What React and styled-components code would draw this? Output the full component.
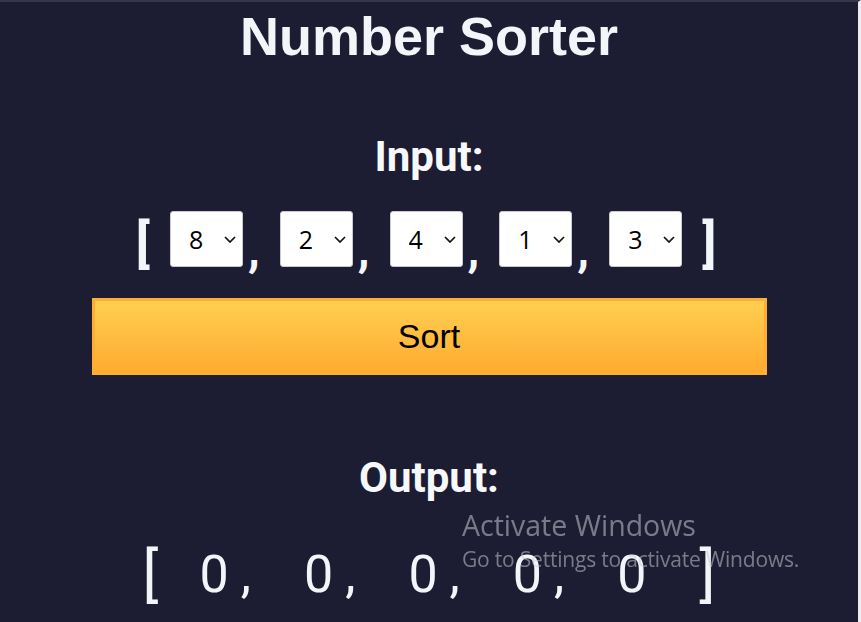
import React, { useState } from 'react';
import styled, { createGlobalStyle } from 'styled-components';

const GlobalStyle = createGlobalStyle`
    html, body {
        margin: 0;
        padding: 0;
        background: #1c1c32;
    }
    body {
        font-family: Roboto, 'Noto Sans', sans-serif;
    }
`;

function NumberSelect({ value, onChange }) {
    return (
        <SelectBox>
            <Select value={value} onChange={e => onChange(Number(e.target.value))}>
                {[0, 1, 2, 3, 4, 5, 6, 7, 8, 9].map(n => (
                    <option key={n} value={n}>{n}</option>
                ))}
            </Select>
            <Chevron width="12" height="7" viewBox="0 0 12 7">
                <path d="M1 1l5 5 5-5" fill="none" stroke="#111" strokeWidth="1.7" />
            </Chevron>
        </SelectBox>
    );
}

function App() {
    const [input, setInput] = useState([8, 2, 4, 1, 3]);
    const [output, setOutput] = useState([0, 0, 0, 0, 0]);

    const setAt = (i, v) => {
        const next = [...input];
        next[i] = v;
        setInput(next);
    };

    return (
        <Page>
            <GlobalStyle />
            <Title>Number Sorter</Title>
            <Heading>Input:</Heading>
            <InputRow>
                <Bracket>[</Bracket>
                {input.map((v, i) => (
                    <Item key={i}>
                        <NumberSelect value={v} onChange={nv => setAt(i, nv)} />
                        {i < input.length - 1 && <Comma>,</Comma>}
                    </Item>
                ))}
                <Bracket>]</Bracket>
            </InputRow>
            <SortButton onClick={() => setOutput([...input].sort((a, b) => a - b))}>
                Sort
            </SortButton>
            <Heading $output>Output:</Heading>
            <OutputRow>
                <OutBracket>[</OutBracket>
                {output.map((v, i) => (
                    <OutValue key={i}>{v}{i < output.length - 1 ? ',' : ''}</OutValue>
                ))}
                <OutBracket>]</OutBracket>
            </OutputRow>
            <Watermark>
                <WatermarkTitle>Activate Windows</WatermarkTitle>
                <WatermarkText>Go to Settings to activate Windows.</WatermarkText>
            </Watermark>
        </Page>
    );
}

export default App;

const Page = styled.div`
    box-sizing: border-box;
    min-height: 622px;
    border-top: 2px solid #35354d;
    border-right: 3px solid #ececec;
    display: flex;
    flex-direction: column;
    align-items: center;
    color: #f5f6fa;
`;

const Title = styled.h1`
    margin: 3px 0 0;
    font-family: 'Liberation Sans', Arial, sans-serif;
    font-size: 54px;
    font-weight: 700;
    line-height: 62px;
    color: #f4f5f9;
`;

const Heading = styled.h2`
    margin: ${props => props.$output ? '79px 0 0' : '66px 0 0'};
    font-family: Roboto, sans-serif;
    font-size: 42px;
    font-weight: 700;
    line-height: 48px;
    color: #f7f8fb;
`;

const InputRow = styled.div`
    display: flex;
    align-items: center;
    gap: 20px;
    margin: 30px 0 0 -6px;
    height: 56px;
`;

const Bracket = styled.span`
    font-family: Roboto, sans-serif;
    font-size: 51px;
    font-weight: 700;
    line-height: 1;
    margin-top: 8px;
    color: #f4f5f9;
`;

const Item = styled.div`
    display: flex;
    align-items: flex-end;
    gap: 5px;
`;

const Comma = styled.span`
    font-family: Roboto, sans-serif;
    font-size: 48px;
    font-weight: 700;
    line-height: 1;
    margin-bottom: -7px;
    color: #f4f5f9;
`;

const SelectBox = styled.div`
    position: relative;
    width: 73px;
    height: 56px;
`;

const Select = styled.select`
    appearance: none;
    box-sizing: border-box;
    width: 100%;
    height: 100%;
    padding: 0 0 0 18px;
    border: 1px solid #c9c9cf;
    border-radius: 3px;
    background: #ffffff;
    font-family: 'Open Sans', Roboto, sans-serif;
    font-size: 25px;
    color: #000;
    outline: none;
`;

const Chevron = styled.svg`
    position: absolute;
    right: 7px;
    top: 25px;
    pointer-events: none;
`;

const SortButton = styled.button`
    box-sizing: border-box;
    width: 675px;
    height: 77px;
    margin-top: 31px;
    border: 3px solid #ffad33;
    background: linear-gradient(to bottom, #ffcf52, #ffab2f);
    font-family: 'Liberation Sans', Arial, sans-serif;
    font-size: 34px;
    color: #000;
    cursor: pointer;
`;

const OutputRow = styled.div`
    display: flex;
    align-items: center;
    gap: 41px;
    margin-top: 43px;
    font-family: Roboto, sans-serif;
    font-size: 52px;
    color: #f4f5f9;
`;

const OutBracket = styled.span`
    font-size: 60px;
    line-height: 1;
`;

const OutValue = styled.span`
    letter-spacing: 12px;
    line-height: 1;
`;

const Watermark = styled.div`
    position: fixed;
    left: 462px;
    top: 506px;
    color: rgba(200, 200, 210, 0.55);
    font-family: 'Open Sans', sans-serif;
    pointer-events: none;
`;

const WatermarkTitle = styled.div`
    font-size: 28.5px;
    line-height: 38px;
`;

const WatermarkText = styled.div`
    font-size: 21px;
    line-height: 30px;
    letter-spacing: -0.2px;
`;
